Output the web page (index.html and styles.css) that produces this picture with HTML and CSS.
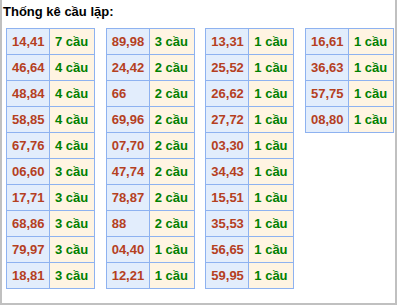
FILE: index.html
```html
<!DOCTYPE html>
<html>
<head>
<meta charset="utf-8">
<link rel="stylesheet" href="styles.css">
</head>
<body>
<div class="box">
  <div class="title">Thống kê cầu lặp:</div>
  <div class="tables">
    <table class="tk">
      <tr><td class="n">14,41</td><td class="c">7 cầu</td></tr>
      <tr><td class="n">46,64</td><td class="c">4 cầu</td></tr>
      <tr><td class="n">48,84</td><td class="c">4 cầu</td></tr>
      <tr><td class="n">58,85</td><td class="c">4 cầu</td></tr>
      <tr><td class="n">67,76</td><td class="c">4 cầu</td></tr>
      <tr><td class="n">06,60</td><td class="c">3 cầu</td></tr>
      <tr><td class="n">17,71</td><td class="c">3 cầu</td></tr>
      <tr><td class="n">68,86</td><td class="c">3 cầu</td></tr>
      <tr><td class="n">79,97</td><td class="c">3 cầu</td></tr>
      <tr><td class="n">18,81</td><td class="c">3 cầu</td></tr>
    </table>
    <table class="tk">
      <tr><td class="n">89,98</td><td class="c">3 cầu</td></tr>
      <tr><td class="n">24,42</td><td class="c">2 cầu</td></tr>
      <tr><td class="n">66</td><td class="c">2 cầu</td></tr>
      <tr><td class="n">69,96</td><td class="c">2 cầu</td></tr>
      <tr><td class="n">07,70</td><td class="c">2 cầu</td></tr>
      <tr><td class="n">47,74</td><td class="c">2 cầu</td></tr>
      <tr><td class="n">78,87</td><td class="c">2 cầu</td></tr>
      <tr><td class="n">88</td><td class="c">2 cầu</td></tr>
      <tr><td class="n">04,40</td><td class="c">1 cầu</td></tr>
      <tr><td class="n">12,21</td><td class="c">1 cầu</td></tr>
    </table>
    <table class="tk">
      <tr><td class="n">13,31</td><td class="c">1 cầu</td></tr>
      <tr><td class="n">25,52</td><td class="c">1 cầu</td></tr>
      <tr><td class="n">26,62</td><td class="c">1 cầu</td></tr>
      <tr><td class="n">27,72</td><td class="c">1 cầu</td></tr>
      <tr><td class="n">03,30</td><td class="c">1 cầu</td></tr>
      <tr><td class="n">34,43</td><td class="c">1 cầu</td></tr>
      <tr><td class="n">15,51</td><td class="c">1 cầu</td></tr>
      <tr><td class="n">35,53</td><td class="c">1 cầu</td></tr>
      <tr><td class="n">56,65</td><td class="c">1 cầu</td></tr>
      <tr><td class="n">59,95</td><td class="c">1 cầu</td></tr>
    </table>
    <table class="tk">
      <tr><td class="n">16,61</td><td class="c">1 cầu</td></tr>
      <tr><td class="n">36,63</td><td class="c">1 cầu</td></tr>
      <tr><td class="n">57,75</td><td class="c">1 cầu</td></tr>
      <tr><td class="n">08,80</td><td class="c">1 cầu</td></tr>
    </table>
  </div>
</div>
</body>
</html>
```
FILE: styles.css
```css
html, body {
  margin: 0;
  padding: 0;
  background: #fff;
}
.box {
  box-sizing: border-box;
  width: 397px;
  height: 305px;
  border: 2px solid #c0c0c0;
  border-top: none;
  padding: 0 0 0 1px;
  font-family: "Liberation Sans", Arial, sans-serif;
}
.title {
  font-size: 13px;
  font-weight: bold;
  color: #000;
  line-height: 15px;
  padding-top: 4px;
  height: 24px;
}
.tables {
  display: flex;
  align-items: flex-start;
  gap: 10.67px;
  margin-left: 3px;
}
.tk {
  border-collapse: collapse;
  width: 88px;
  table-layout: fixed;
}
.tk td {
  box-sizing: border-box;
  border: 1px solid #8eb2f0;
  height: 26px;
  padding: 0 0 0 5px;
  text-align: left;
  font-size: 13px;
  font-weight: bold;
  white-space: nowrap;
}
.tk td.n {
  width: 43px;
  background: #e2edfc;
  color: #b5401f;
}
.tk td.c {
  width: 45px;
  background: #fff4e2;
  color: #008000;
}
```
